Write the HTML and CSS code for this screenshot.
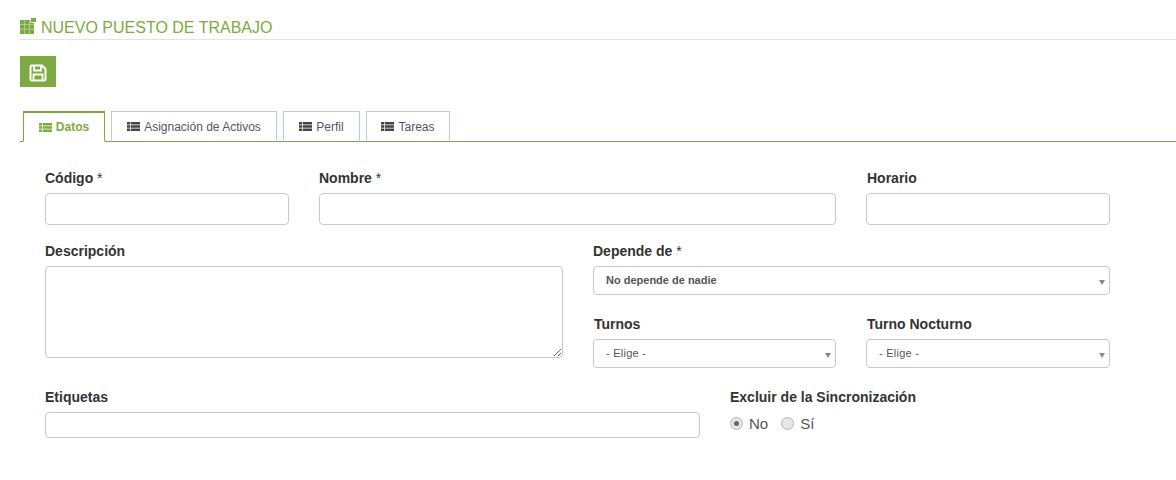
FILE: index.html
```html
<!DOCTYPE html>
<html lang="es">
<head>
<meta charset="utf-8">
<title>Nuevo puesto de trabajo</title>
<link rel="stylesheet" href="styles.css">
</head>
<body>
<header class="page-head">
  <svg class="head-icon" width="16" height="16" viewBox="0 0 16 16" aria-hidden="true">
    <path fill="#c3d8a5" d="M0 2h11v3h3v11H0z"/>
    <path fill="#7daa41" d="M0 2h4.300v4.300H0zM5 2h4.300v4.300H5zM10 5h4v1.300h-4zM0 7h4.300v3.800H0zM5 7h4.300v3.800H5zM10 7h4v3.800h-4zM0 11.500h4.300V16H0zM5 11.500h4.300V16H5zM10 11.500h4V16h-4zM11 0h5v4h-5z"/>
  </svg>
  <h1 class="page-title">NUEVO PUESTO DE TRABAJO</h1>
</header>
<div class="toolbar">
  <button class="save-btn" type="button" aria-label="Guardar">
    <svg width="18" height="18" viewBox="0 0 18 18" aria-hidden="true">
      <path fill="none" stroke="#fff" stroke-width="2" stroke-linejoin="round" d="M2.500 1.500h10.500l3.500 3.500v10a1.500 1.500 0 0 1-1.500 1.500h-12a1.500 1.500 0 0 1-1.500-1.500v-12a1.500 1.500 0 0 1 1-1.500z"/>
      <path fill="none" stroke="#fff" stroke-width="1.800" d="M5 2v4.500h7V2M4.500 16.500v-6h9v6"/>
    </svg>
  </button>
</div>
<nav class="tabs">
  <a class="tab tab-active"><svg class="tab-icon"><use href="#list"/></svg>Datos</a>
  <a class="tab"><svg class="tab-icon"><use href="#list"/></svg>Asignación de Activos</a>
  <a class="tab"><svg class="tab-icon"><use href="#list"/></svg>Perfil</a>
  <a class="tab"><svg class="tab-icon"><use href="#list"/></svg>Tareas</a>
</nav>
<svg class="defs" width="0" height="0" aria-hidden="true">
  <symbol id="list" viewBox="0 0 13 9">
    <path fill="currentColor" d="M0 0h3.300v2.500H0zM4 0h9v2.500H4zM0 3.250h3.300v2.500H0zM4 3.250h9v2.500H4zM0 6.500h3.300V9H0zM4 6.500h9V9H4z"/>
  </symbol>
</svg>
<form class="form">
  <div class="row row-top">
    <div class="field"><label class="label">Código <span class="req">*</span></label><input class="input input-tall" type="text"></div>
    <div class="field"><label class="label">Nombre <span class="req">*</span></label><input class="input input-tall" type="text"></div>
    <div class="field"><label class="label label-inset">Horario</label><input class="input input-tall" type="text"></div>
  </div>
  <div class="row row-mid">
    <div class="field"><label class="label">Descripción</label><textarea class="input textarea"></textarea></div>
    <div class="stack">
      <div class="field"><label class="label">Depende de <span class="req">*</span></label>
        <div class="select select-bold">No depende de nadie<span class="arrow"></span></div></div>
      <div class="pair">
        <div class="field"><label class="label label-inset">Turnos</label><div class="select">- Elige -<span class="arrow"></span></div></div>
        <div class="field"><label class="label label-inset">Turno Nocturno</label><div class="select">- Elige -<span class="arrow"></span></div></div>
      </div>
    </div>
  </div>
  <div class="row row-bottom">
    <div class="field"><label class="label">Etiquetas</label><input class="input input-short" type="text"></div>
    <div class="field"><label class="label">Excluir de la Sincronización</label>
      <div class="radios">
        <span class="radio radio-on"></span><span class="radio-text">No</span>
        <span class="radio"></span><span class="radio-text">Sí</span>
      </div>
    </div>
  </div>
</form>
</body>
</html>
```
FILE: styles.css
```css
* { box-sizing: border-box; }
html, body { margin: 0; padding: 0; }
body {
  background: #fff;
  font-family: "Liberation Sans", Arial, sans-serif;
  color: #333;
  height: 480px;
  overflow: hidden;
}
.page-head {
  display: flex;
  align-items: flex-start;
  gap: 5px;
  height: 40px;
  margin-left: 20px;
  padding-top: 18px;
  border-bottom: 1px solid #e3e3e3;
}
.head-icon { flex: none; }
.page-title {
  margin: 0;
  font-size: 16px;
  line-height: 19px;
  font-weight: 400;
  color: #7daa41;
}
.toolbar { margin: 16px 0 0 20px; height: 31px; }
.save-btn {
  display: flex;
  align-items: center;
  justify-content: center;
  width: 36px;
  height: 31px;
  padding: 3px 0 0;
  border: 0;
  background: #7daa41;
}
.defs { position: absolute; }
.tabs {
  display: grid;
  grid-template-columns: 82px 166px 77px 84px;
  column-gap: 6px;
  margin: 24px 0 0 20px;
  padding-left: 3px;
  height: 31px;
  border-bottom: 1px solid #7f9f56;
}
.tab {
  display: flex;
  align-items: center;
  justify-content: center;
  height: 31px;
  border: 1px solid #bccbd6;
  border-bottom: 1px solid #7f9f56;
  font-size: 12px;
  color: #4c5a66;
}
.tab-icon { width: 13px; height: 9px; margin-right: 4px; color: #444; }
.tab-active {
  border: 1px solid #7daa41;
  border-top-width: 2px;
  border-bottom: 1px solid #fff;
  font-weight: 700;
  color: #7daa41;
}
.tab-active .tab-icon { color: #7daa41; }
.form { margin: 0 0 0 45px; width: 1065px; padding-top: 28px; }
.row { display: grid; column-gap: 30px; }
.row-top { grid-template-columns: 244px 517px 244px; }
.row-mid { grid-template-columns: 518px 517px; margin-top: 18px; }
.row-bottom { grid-template-columns: 655px 380px; margin-top: 21px; }
.field { display: flex; flex-direction: column; min-width: 0; }
.label {
  display: block;
  height: 16px;
  margin-bottom: 7px;
  font-size: 14px;
  line-height: 16px;
  font-weight: 700;
  color: #333;
}
.label-inset { padding-left: 1px; }
.req { font-weight: 400; }
.input {
  display: block;
  width: 100%;
  border: 1px solid #c8c8c8;
  border-radius: 4px;
  background: #fff;
  margin: 0;
  padding: 0;
  outline: 0;
}
.input-tall { height: 32px; }
.input-short { height: 26px; }
.textarea { height: 92px; resize: vertical; }
.stack { display: flex; flex-direction: column; gap: 21px; }
.pair { display: grid; grid-template-columns: 243px 244px; column-gap: 30px; }
.select {
  position: relative;
  height: 29px;
  padding-left: 12px;
  border: 1px solid #c8c8c8;
  border-radius: 4px;
  background: #fff;
  font-size: 11px;
  letter-spacing: 0.25px;
  line-height: 27px;
  color: #555;
}
.select-bold { font-weight: 700; letter-spacing: 0; }
.arrow {
  position: absolute;
  right: 4px;
  top: 13px;
  width: 0;
  height: 0;
  border-left: 3px solid transparent;
  border-right: 3px solid transparent;
  border-top: 5px solid #888;
}
.radios { display: flex; align-items: center; height: 20px; margin-top: 1px; }
.radio {
  width: 13px;
  height: 13px;
  border: 1px solid #b4b4b4;
  border-radius: 50%;
  background: #e6e6e6;
  display: flex;
  align-items: center;
  justify-content: center;
}
.radio-on::after {
  content: "";
  width: 5px;
  height: 5px;
  border-radius: 50%;
  background: #666;
}
.radio-text { font-size: 15px; color: #555; margin: 0 13px 0 6px; }
```
